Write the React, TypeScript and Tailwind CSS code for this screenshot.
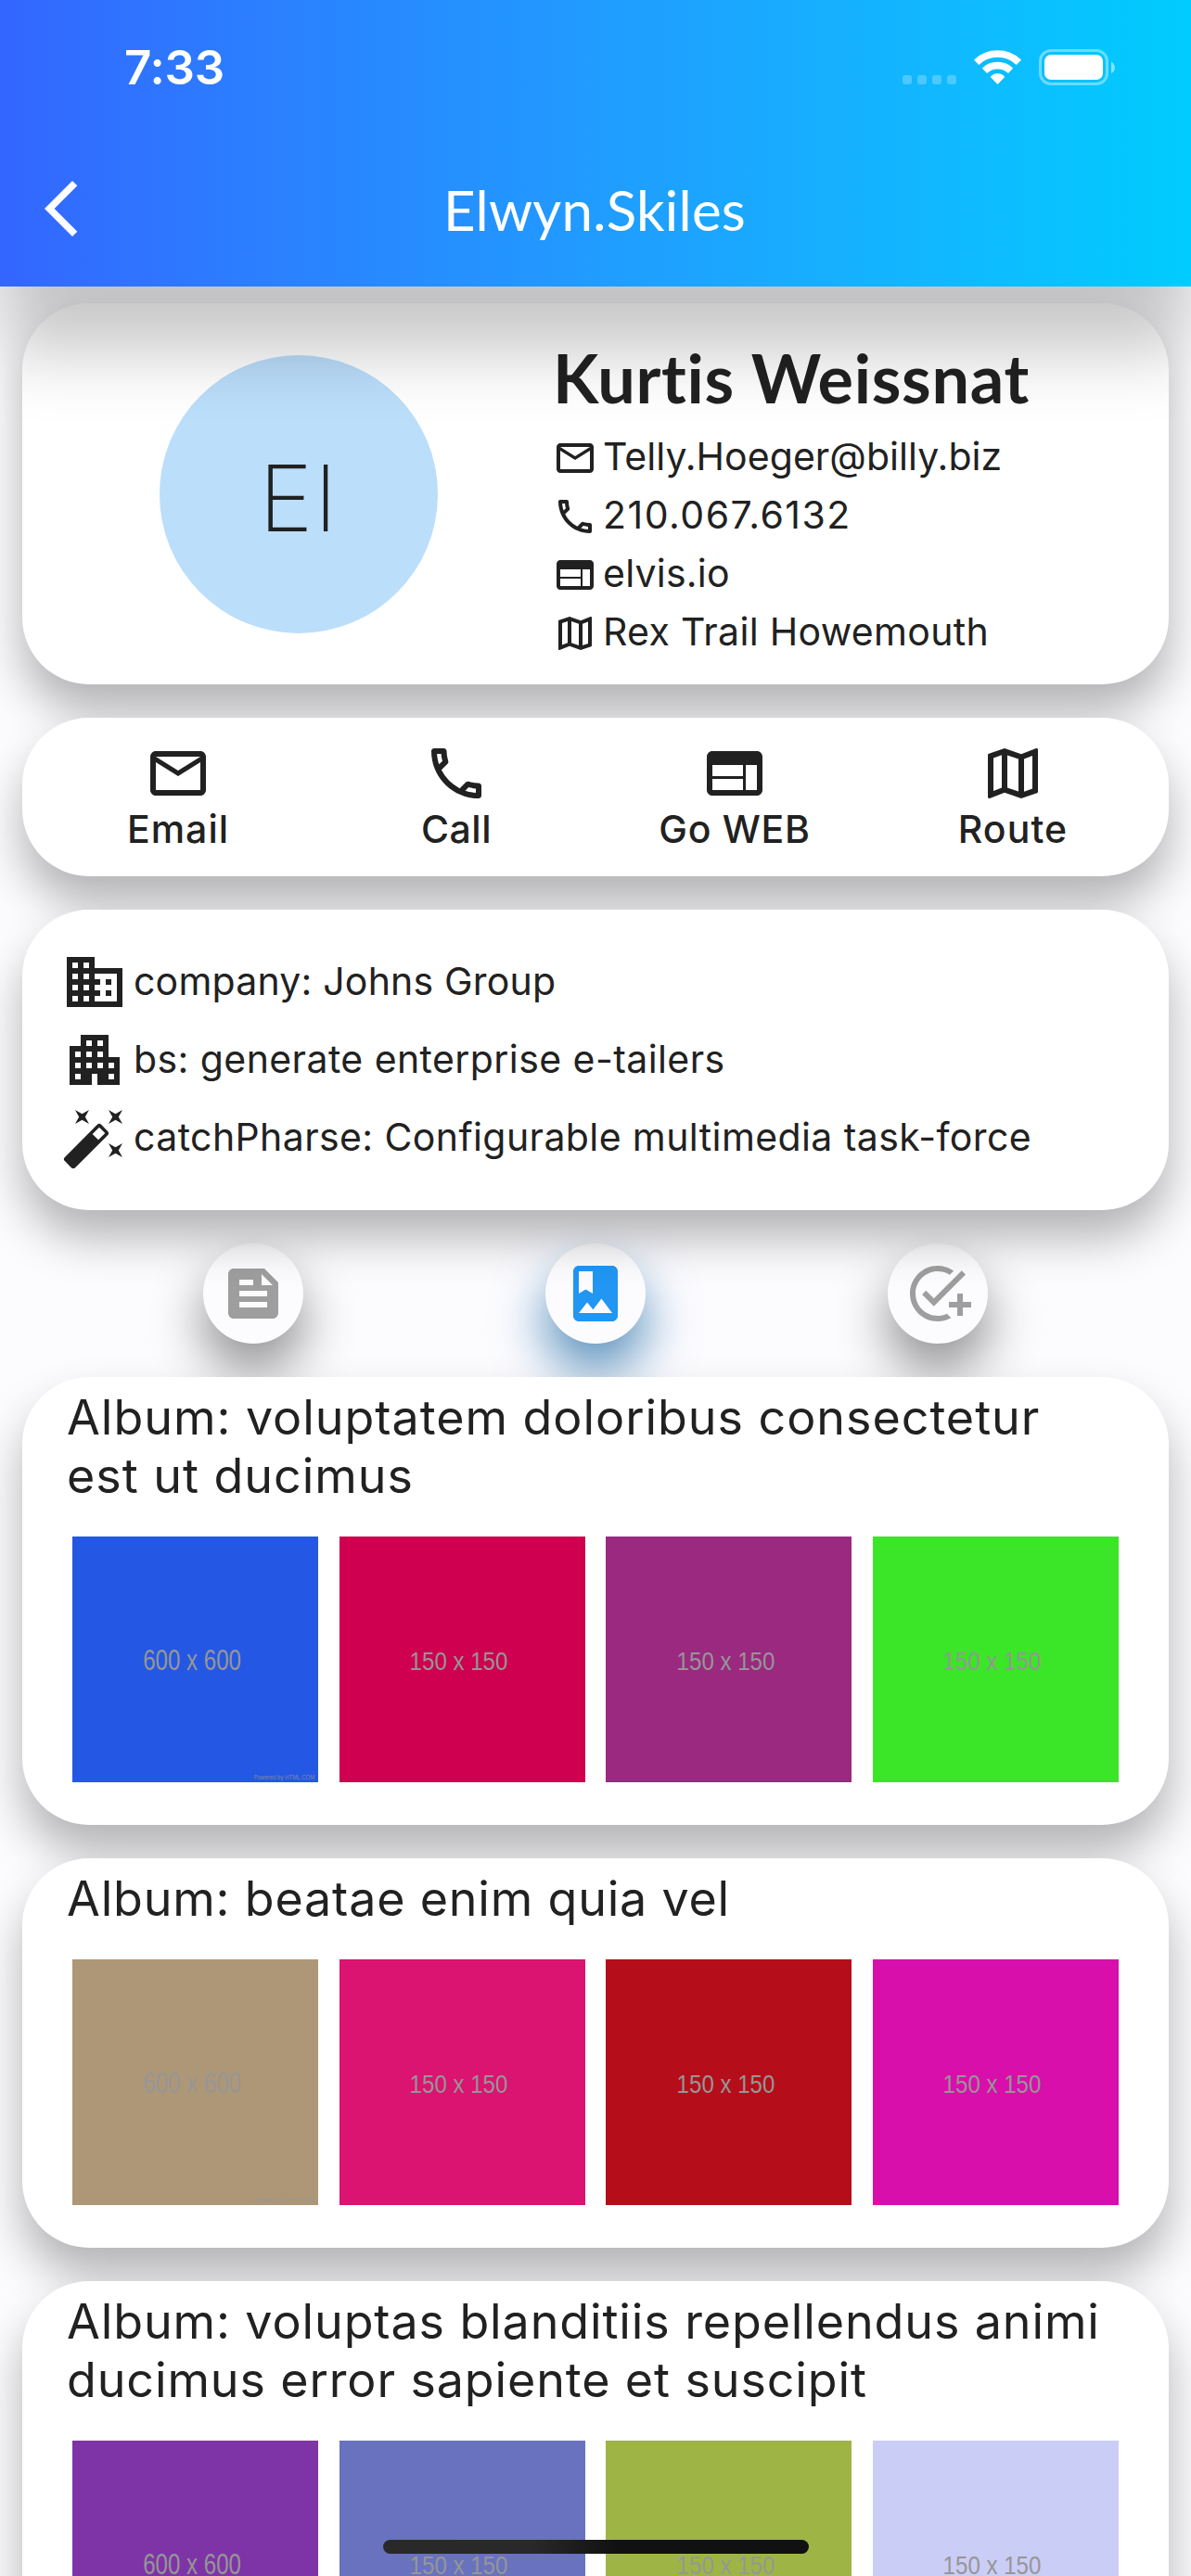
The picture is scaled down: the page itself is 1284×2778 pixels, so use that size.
import React from "react";
import type { ComponentType, ReactNode } from "react";
import {
  MdAddTask,
  MdApartment,
  MdAutoFixHigh,
  MdBusiness,
  MdFeed,
  MdMailOutline,
  MdOutlineMap,
  MdOutlinePhone,
  MdWeb,
} from "react-icons/md";

type Icon = ComponentType<{ className?: string }>;

const contacts: { icon: Icon; text: string; spacing: string }[] = [
  { icon: MdMailOutline, text: "Telly.Hoeger@billy.biz", spacing: "tracking-[0.05px]" },
  { icon: MdOutlinePhone, text: "210.067.6132", spacing: "tracking-[1.5px]" },
  { icon: MdWeb, text: "elvis.io", spacing: "tracking-[0.23px]" },
  { icon: MdOutlineMap, text: "Rex Trail Howemouth", spacing: "tracking-[0.31px]" },
];

const actions: { icon: Icon; label: string; spacing: string }[] = [
  { icon: MdMailOutline, label: "Email", spacing: "tracking-[1px]" },
  { icon: MdOutlinePhone, label: "Call", spacing: "tracking-[0.5px]" },
  { icon: MdWeb, label: "Go WEB", spacing: "tracking-[0.7px]" },
  { icon: MdOutlineMap, label: "Route", spacing: "tracking-[1.1px]" },
];

const companyRows: { icon: Icon; text: string; spacing: string }[] = [
  { icon: MdBusiness, text: "company: Johns Group", spacing: "tracking-[0.2px]" },
  { icon: MdApartment, text: "bs: generate enterprise e-tailers", spacing: "tracking-[0.42px]" },
  { icon: MdAutoFixHigh, text: "catchPharse: Configurable multimedia task-force", spacing: "tracking-[0.4px]" },
];

const albums: { title: string; spacing: string; tiles: string[] }[] = [
  {
    title: "Album: voluptatem doloribus consectetur est ut ducimus",
    spacing: "tracking-[0.96px]",
    tiles: ["bg-[#2457e3]", "bg-[#ce004f]", "bg-[#9b2980]", "bg-[#3be527]"],
  },
  {
    title: "Album: beatae enim quia vel",
    spacing: "tracking-[0.8px]",
    tiles: ["bg-[#ae9777]", "bg-[#db1371]", "bg-[#b50e1a]", "bg-[#d90fab]"],
  },
  {
    title: "Album: voluptas blanditiis repellendus animi ducimus error sapiente et suscipit",
    spacing: "tracking-[0.88px]",
    tiles: ["bg-[#7e34a6]", "bg-[#6872be]", "bg-[#9eb546]", "bg-[#cacdf6]"],
  },
];

function PhotoAlbumIcon({ className }: { className?: string }) {
  return (
    <svg viewBox="0 0 24 24" fill="currentColor" className={className}>
      <path d="M18 2H6c-1.1 0-2 .9-2 2v16c0 1.1.9 2 2 2h12c1.1 0 2-.9 2-2V4c0-1.1-.9-2-2-2zM6 4h5v8l-2.5-1.5L6 12V4zm0 15l3-3.86 2.14 2.58 3-3.86L18 19H6z" />
    </svg>
  );
}

function Card({ className = "", children }: { className?: string; children: ReactNode }) {
  return (
    <section
      className={`relative mx-6 rounded-[72px] bg-white shadow-[0_30px_50px_rgba(0,0,0,0.29)] ${className}`}
    >
      {children}
    </section>
  );
}

function StatusBar() {
  return (
    <div className="flex h-[145px] items-center justify-between pl-[134px] pr-[82px]">
      <span className="text-[51px] font-semibold leading-none tracking-[-0.2px]">7:33</span>
      <div className="flex items-center">
        <div className="mt-[27px] flex gap-[6px]">
          {[0, 1, 2, 3].map((i) => (
            <span key={i} className="size-[10px] rounded-[3px] bg-white/25" />
          ))}
        </div>
        <svg viewBox="0 0 51 37" className="ml-[19px] h-[37px] w-[51px]" fill="white">
          <path
            d="M.8 10.7A36.2 36.2 0 0 1 50.2 10.7L45.8 15.2A29.7 29.7 0 0 0 5.2 15.2ZM9.6 19.7A23.4 23.4 0 0 1 41.4 19.7L37 24.2A17.2 17.2 0 0 0 14 24.2ZM18.5 28.9A9.8 9.8 0 0 1 32.5 28.9L25.5 36.2Z"
            stroke="white"
            strokeWidth="1.2"
            strokeLinejoin="round"
          />
        </svg>
        <div className="ml-[19px] h-[39px] w-[75px] rounded-[13px] border-[3px] border-white/40 p-[3px]">
          <div className="h-full rounded-[7px] bg-white" />
        </div>
        <svg viewBox="0 0 4 12" className="ml-[3px] h-[12px] w-[4px]" fill="white" fillOpacity="0.5">
          <path d="M0 0C5.3 2 5.3 10 0 12Z" />
        </svg>
      </div>
    </div>
  );
}

function Header() {
  return (
    <header className="relative z-10 h-[309px] bg-linear-to-r from-[#3366ff] to-[#00ccff] text-white shadow-[0_70px_70px_rgba(0,0,0,0.22)]">
      <StatusBar />
      <div className="relative flex h-[164px] items-center justify-center pb-[3px] pr-[2px]">
        <button className="absolute left-[30px] top-[44px]" aria-label="Back">
          <svg viewBox="0 0 24 24" className="size-[72px]" fill="white">
            <path d="M17.77 3.77L16 2 6 12l10 10 1.77-1.77L9.54 12z" />
          </svg>
        </button>
        <h1 className="font-[Lato] text-[60px] leading-none tracking-[0.27px]">Elwyn.Skiles</h1>
      </div>
    </header>
  );
}

function Tab({ icon: Icon, active = false }: { icon: Icon; active?: boolean }) {
  return (
    <button
      className={`flex size-[108px] items-center justify-center rounded-full bg-[#fcfcff] ${
        active
          ? "text-[#2196f3] shadow-[0_30px_56px_rgba(0,85,150,0.66)]"
          : "text-[#9e9e9e] shadow-[0_30px_56px_rgba(0,0,0,0.44)]"
      }`}
    >
      <Icon className="size-[72px]" />
    </button>
  );
}

function Tile({ color, large }: { color: string; large: boolean }) {
  return (
    <div
      className={`relative flex size-[265px] items-center justify-center pr-[7px] font-['Liberation_Sans'] text-[#969696] ${color}`}
    >
      {large ? (
        <>
          <span className="scale-x-[0.777] whitespace-nowrap pt-[2px] text-[31px] leading-none">600 x 600</span>
          <span className="absolute bottom-[2px] right-[4px] origin-right scale-x-[0.86] whitespace-nowrap text-[7px] leading-none opacity-80">
            Powered by HTML.COM
          </span>
        </>
      ) : (
        <span className="scale-x-[0.86] whitespace-nowrap pt-[4px] text-[28px] leading-none">150 x 150</span>
      )}
    </div>
  );
}

export default function App() {
  return (
    <div className="relative h-[2778px] w-[1284px] overflow-hidden bg-[#fcfcff] font-[Inter,sans-serif] text-[#212121]">
      <Header />

      <main className="flex flex-col gap-9 pt-[18px]">
        <Card className="flex h-[411px] pl-[148px]">
          <div className="flex size-[300px] shrink-0 items-center justify-center self-center rounded-full bg-[#bbdefb] pt-[10px] text-[99px] font-extralight leading-none tracking-[2.6px]">
            El
          </div>
          <div className="ml-[124px] pt-[37px]">
            <h2 className="mb-3 whitespace-nowrap font-[Lato] text-[72px] font-bold leading-[86px] tracking-[0.7px]">
              Kurtis Weissnat
            </h2>
            {contacts.map(({ icon: Icon, text, spacing }) => (
              <div key={text} className="flex h-[63px] items-center gap-[6px]">
                <Icon className="size-12" />
                <span className={`-mt-[3px] whitespace-nowrap text-[41px] leading-none ${spacing}`}>{text}</span>
              </div>
            ))}
          </div>
        </Card>

        <Card className="grid h-[171px] grid-cols-4 px-[18px] pt-6">
          {actions.map(({ icon: Icon, label, spacing }) => (
            <button key={label} className="flex flex-col items-center">
              <Icon className="size-[72px]" />
              <span className={`-mt-px text-[41px] font-medium leading-[50px] ${spacing}`}>{label}</span>
            </button>
          ))}
        </Card>

        <Card className="px-[42px] py-9">
          {companyRows.map(({ icon: Icon, text, spacing }) => (
            <div key={text} className="flex h-[84px] items-center gap-[6px]">
              <Icon className="size-[72px]" />
              <span className={`-mt-[2px] whitespace-nowrap text-[41px] leading-none ${spacing}`}>{text}</span>
            </div>
          ))}
        </Card>

        <nav className="flex justify-between px-[219px]">
          <Tab icon={MdFeed} />
          <Tab icon={PhotoAlbumIcon} active />
          <Tab icon={MdAddTask} />
        </nav>

        {albums.map(({ title, spacing, tiles }) => (
          <Card key={title} className="px-12 pb-[46px] pt-3">
            <h3 className={`text-[52px] leading-[63px] ${spacing}`}>{title}</h3>
            <div className="mx-[6px] mt-[34px] flex justify-between">
              {tiles.map((color, i) => (
                <Tile key={color} color={color} large={i === 0} />
              ))}
            </div>
          </Card>
        ))}
      </main>

      <div className="absolute bottom-6 left-[413px] z-20 h-[15px] w-[459px] rounded-full bg-linear-to-r from-[#292929] from-35% to-[#111111] to-55%" />
    </div>
  );
}
